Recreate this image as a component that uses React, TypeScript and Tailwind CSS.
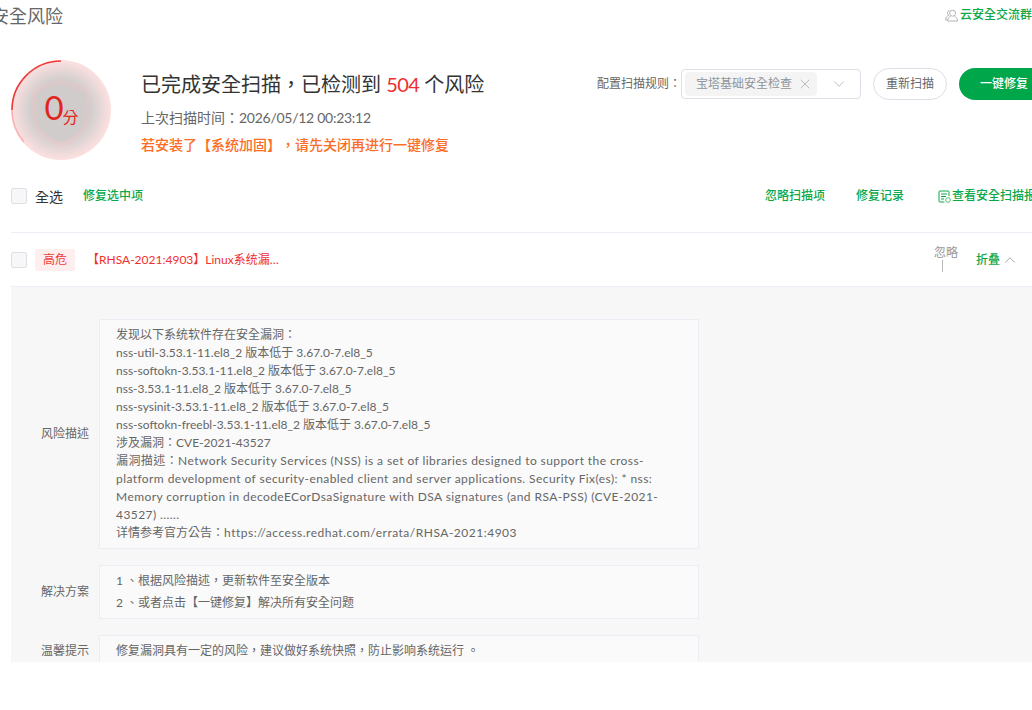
import React from "react";
import { X, ChevronDown, ChevronUp } from "lucide-react";

const Check = ({ className = "" }: { className?: string }) => (
  <span className={"block w-4 h-4 rounded-[2px] border border-[#dcdfe6] bg-[#f7f7f7] shrink-0 " + className} />
);

const desc = [
  "发现以下系统软件存在安全漏洞：",
  "nss-util-3.53.1-11.el8_2 版本低于 3.67.0-7.el8_5",
  "nss-softokn-3.53.1-11.el8_2 版本低于 3.67.0-7.el8_5",
  "nss-3.53.1-11.el8_2 版本低于 3.67.0-7.el8_5",
  "nss-sysinit-3.53.1-11.el8_2 版本低于 3.67.0-7.el8_5",
  "nss-softokn-freebl-3.53.1-11.el8_2 版本低于 3.67.0-7.el8_5",
  "涉及漏洞：CVE-2021-43527",
];

const ReportIcon = () => (
  <svg width="13" height="13" viewBox="0 0 13 13" fill="none" stroke="#0ba84a" strokeWidth="1" className="shrink-0">
    <path d="M11 6V2a1 1 0 0 0-1-1H2a1 1 0 0 0-1 1v9a1 1 0 0 0 1 1h4.5" />
    <path d="M3 4h6M3 6.5h5M3 9h3" />
    <circle cx="10" cy="10" r="2.3" strokeOpacity="0.7" />
  </svg>
);

const PeopleIcon = () => (
  <svg width="14" height="13" viewBox="0 0 14 13" fill="none" stroke="#aaaaaa" strokeWidth="0.9" className="shrink-0">
    <circle cx="7.6" cy="4.2" r="3" />
    <path d="M2.6 12c0-2.6 1.6-4 3-4.6M12.6 12c0-2.6-1.6-4-3-4.6M2.6 12h10" />
    <path d="M4.4 1.4a2.6 2.6 0 0 0-.6 4.8C2 6.9.6 8.4.6 11h2" />
  </svg>
);

export default function App() {
  return (
    <div className="w-[1032px] h-[710px] overflow-hidden bg-white text-[12px] [text-spacing-trim:space-all] font-['Lato','Noto_Sans_CJK_TC',sans-serif]">
      <div className="h-[662px] overflow-hidden flex flex-col">
        {/* header */}
        <div className="h-[60px] shrink-0 flex justify-between -ml-[9px] w-[1041px]">
          <div className="text-[18px] leading-[32px] text-[#666]">安全风险</div>
          <div className="h-[30px] flex items-center gap-[1px] text-[12px] font-medium text-[#0ba84a] whitespace-nowrap">
            <PeopleIcon />
            <span>云安全交流群</span>
          </div>
        </div>

        {/* summary */}
        <div className="h-[100px] shrink-0 flex pl-[11px]">
          <div className="relative w-[100px] h-[100px] rounded-full shrink-0 flex items-center justify-center bg-[radial-gradient(circle_closest-side,#cccccc_55%,#fde0e0_100%)]">
            <svg className="absolute left-0 top-0" width="100" height="100" viewBox="0 0 100 100" fill="none">
              <path d="M50 18 L79 29 V55 Q79 75 50 88 Q21 75 21 55 V29 Z" fill="#f8c4c4" fillOpacity="0.3" />
              <path d="M50 24 L74 33 V55 Q74 72 50 82 Q26 72 26 55 V33 Z" fill="#cccccc" fillOpacity="0.75" />
              <path d="M50 1 A49 49 0 0 0 1 50" stroke="#f03a3a" strokeWidth="1.6" />
              <path d="M1 50 A49 49 0 0 0 13 82" stroke="#fbb3b3" strokeWidth="1.6" />
            </svg>
            <span className="relative text-[#e0261c] flex items-baseline leading-none pl-[1px]">
              <span className="relative -top-[3px] text-[33px] w-[18px]">0</span>
              <span className="text-[16px]">分</span>
            </span>
          </div>
          <div className="ml-[30px] w-[456px] shrink-0">
            <div className="text-[20px] leading-[28px] mt-[10px] text-[#333] whitespace-nowrap">
              已完成安全扫描，已检测到 <span className="text-[#ef2f2f] tracking-[-0.6px]">504</span> 个风险
            </div>
            <div className="text-[14px] leading-[20px] mt-[10px] text-[#666]">上次扫描时间：<span className="tracking-[-0.27px]">2026/05/12 00:23:12</span></div>
            <div className="text-[14px] leading-[20px] mt-[7px] font-medium text-[#fc6d26] whitespace-nowrap">若安装了【系统加固】，请先关闭再进行一键修复</div>
          </div>
          <div className="h-[48px] flex items-center shrink-0 whitespace-nowrap self-start">
            <span className="text-[12px] text-[#666] w-[84px]">配置扫描规则：</span>
            <div className="w-[180px] h-[30px] rounded-[4px] border border-[#dcdfe6] flex items-center pl-[3px] pr-[12px] justify-between">
              <span className="w-[132px] h-[24px] rounded-[4px] bg-[#f4f4f5] text-[#909399] flex items-center pl-[11px] gap-[5px]">
                宝塔基础安全检查
                <X size={16} strokeWidth={0.9} color="#909399" />
              </span>
              <ChevronDown size={18} strokeWidth={1} color="#aaaaaa" />
            </div>
            <button className="ml-[12px] w-[74px] h-[32px] rounded-full border border-[#dcdfe6] text-[#666] text-[12px] bg-white shrink-0">重新扫描</button>
            <button className="ml-[12px] w-[90px] h-[32px] rounded-full bg-[#00a64a] text-white text-[12px] font-medium shrink-0">一键修复</button>
          </div>
        </div>

        {/* toolbar */}
        <div className="h-[73px] shrink-0 ml-[11px] border-b border-[#ebeef5] flex justify-between items-start pt-[27px]">
          <div className="flex items-center h-[18px]">
            <Check />
            <span className="ml-[8px] text-[14px] text-[#333]">全选</span>
            <span className="ml-[20px] text-[#0ba84a] font-medium">修复选中项</span>
          </div>
          <div className="flex items-center h-[18px] text-[#0ba84a] font-medium whitespace-nowrap w-[267px]">
            <span>忽略扫描项</span>
            <span className="w-px h-3 bg-[#aaa] ml-[15px] mr-[16px]" />
            <span>修复记录</span>
            <span className="w-px h-3 bg-[#aaa] ml-[16px] mr-[18px]" />
            <ReportIcon />
            <span className="ml-[1px]">查看安全扫描报告</span>
          </div>
        </div>

        {/* item row */}
        <div className="h-[54px] shrink-0 ml-[11px] border-b border-[#ebeef5] flex items-center">
          <Check />
          <span className="ml-[8px] w-[40px] h-[22px] rounded-[2px] bg-[#ffeeee] text-[#ef3a3a] flex items-center justify-center">高危</span>
          <span className="ml-[12px] text-[#ef2f2f]">【RHSA-2021:4903】Linux系统漏…</span>
          <div className="ml-auto flex items-center">
            <div className="flex flex-col items-start mr-[18px] text-[#999] leading-[14px] -mt-[1px]">
              <span>忽略</span>
              <span className="w-px h-[12px] bg-[#bbb] ml-[8px]" />
            </div>
            <span className="text-[#0ba84a] font-medium">折叠</span>
            <ChevronUp size={18} strokeWidth={1} color="#888" className="ml-[1px] mr-[13px]" />
          </div>
        </div>

        {/* detail */}
        <div className="flex-1 ml-[11px] bg-[#f7f7f7] pt-[32px] pr-[333px] flex flex-col gap-[16px] text-[#666]">
          <div className="flex items-center">
            <span className="w-[88px] pl-[30px] shrink-0">风险描述</span>
            <div className="w-[600px] border border-[#ebeef5] bg-[#fafafa] px-[16px] py-[6px] leading-[18px]">
              {desc.map((l, i) => (
                <div key={i}>{l}</div>
              ))}
              <div className="tracking-[0.42px]">
                漏洞描述：Network Security Services (NSS) is a set of libraries designed to support the cross-platform development of security-enabled client and server applications. Security Fix(es): * nss: Memory corruption in decodeECorDsaSignature with DSA signatures (and RSA-PSS) (CVE-2021-43527) ......
              </div>
              <div>详情参考官方公告：<span className="tracking-[0.5px]">https://access.redhat.com/errata/RHSA-2021:4903</span></div>
            </div>
          </div>
          <div className="flex items-center">
            <span className="w-[88px] pl-[30px] shrink-0">解决方案</span>
            <div className="w-[600px] h-[54px] border border-[#ebeef5] bg-[#fafafa] pl-[16px] pt-[4px] leading-[22px]">
              <div>1 、根据风险描述，更新软件至安全版本</div>
              <div>2 、或者点击【一键修复】解决所有安全问题</div>
            </div>
          </div>
          <div className="flex items-start">
            <span className="w-[88px] pl-[30px] shrink-0 pt-[7px] leading-[18px]">温馨提示</span>
            <div className="w-[600px] h-[40px] border border-[#ebeef5] bg-[#fafafa] pl-[16px] pt-[6px] leading-[18px]">
              修复漏洞具有一定的风险，建议做好系统快照，防止影响系统运行 。
            </div>
          </div>
        </div>
      </div>
    </div>
  );
}
